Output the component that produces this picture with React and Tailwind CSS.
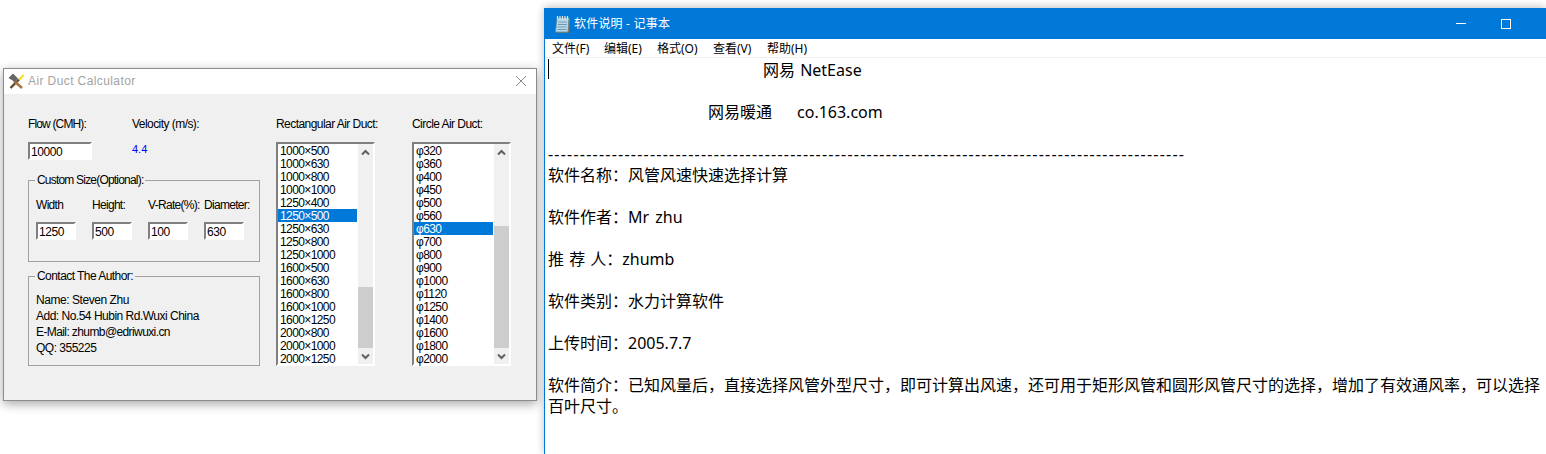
const rect = ["1000×500","1000×630","1000×800","1000×1000","1250×400","1250×500","1250×630","1250×800","1250×1000","1600×500","1600×630","1600×800","1600×1000","1600×1250","2000×800","2000×1000","2000×1250"];
const circ = ["320","360","400","450","500","560","630","700","800","900","1000","1120","1250","1400","1600","1800","2000"].map((v) => "φ" + v);

function Field({ value, w }) {
  return (
    <div className={`${w} h-[18px] border-2 border-t-[#808080] border-l-[#808080] border-b-white border-r-white bg-white pl-[1px] leading-[16px] text-[12px] tracking-[-0.4px] text-black`}>
      {value}
    </div>
  );
}

function Chevron({ up }) {
  return (
    <svg width="9" height="7" viewBox="0 0 9 7">
      <path d={up ? "M1 5.5 L4.5 2 L8 5.5" : "M1 1.5 L4.5 5 L8 1.5"} fill="none" stroke="#606060" strokeWidth="2" />
    </svg>
  );
}

function ListBox({ items, selected, spacerTop, thumbH }) {
  return (
    <div className="flex h-[224px] w-[99px] border-2 border-t-[#808080] border-l-[#808080] border-b-white border-r-white bg-white">
      <div className="flex w-[79px] shrink-0 flex-col text-[12px] tracking-[-0.6px] text-black">
        {items.map((it) => (
          <div key={it} className={`h-[13px] whitespace-nowrap pl-[2px] leading-[15px] ${it === selected ? "bg-[#0078d7] text-white" : ""}`}>{it}</div>
        ))}
      </div>
      <div className="w-[1px] shrink-0 bg-white" />
      <div className="flex w-[15px] shrink-0 flex-col bg-[#f0f0f0]">
        <div className="flex h-[17px] items-center justify-center"><Chevron up /></div>
        <div style={{ height: spacerTop }} />
        <div className="bg-[#cdcdcd]" style={{ height: thumbH }} />
        <div className="flex flex-1 items-center justify-center"><Chevron /></div>
      </div>
    </div>
  );
}

function HammerIcon() {
  return (
    <svg width="16" height="16" viewBox="0 0 16 16" className="shrink-0">
      <path d="M2.5 15 L11 6.5" stroke="#5e4a2e" strokeWidth="2.4" />
      <path d="M6 8 L14 15" stroke="#a8763c" strokeWidth="2.6" />
      <path d="M0.5 5 L5 0.5 L10 5.5 L7 9 Z" fill="#666666" />
      <path d="M10.5 6 L15 1 L16 3 L12 7.5 Z" fill="#f2e01e" />
    </svg>
  );
}

function NotepadIcon() {
  return (
    <svg width="16" height="18" viewBox="0 0 16 18" className="shrink-0">
      <path d="M3 3 H15 L14 17 H1.5 Z" fill="#b9d9ea" stroke="#5e8ba6" strokeWidth="0.8" />
      <path d="M14 17 L15 3 L15.8 3.5 L15 17.5 H2 V17 Z" fill="#9a7b4f" />
      <path d="M4 7 H13 M4 9.5 H13 M3.5 12 H12.5 M3.5 14.5 H12.5" stroke="#6f9cb5" strokeWidth="1" />
      <path d="M3.5 1 V4 M6 1 V4 M8.5 1 V4 M11 1 V4 M13.5 1 V4" stroke="#dfe7ec" strokeWidth="1.2" />
    </svg>
  );
}

const lines = [
  ["软件名称：风管风速快速选择计算", ""], ["", ""],
  ["软件作者：Mr zhu", "[word-spacing:2px]"], ["", ""],
  ["推 荐 人：zhumb", "[word-spacing:1px]"], ["", ""],
  ["软件类别：水力计算软件", ""], ["", ""],
  ["上传时间：2005.7.7", ""], ["", ""],
];

const menus = [["文件(F)", "w-[52px]"], ["编辑(E)", "w-[53px]"], ["格式(O)", "w-[56px]"], ["查看(V)", "w-[54px]"], ["帮助(H)", "w-[41px]"]];

export default function App() {
  return (
    <div className="relative h-[454px] w-[1546px] overflow-hidden bg-white" style={{ fontFamily: '"Liberation Sans", Arial, sans-serif' }}>
      {/* Dialog window */}
      <div className="absolute left-[3px] top-[68px] flex h-[333px] w-[534px] flex-col border border-[#8c8c8c] bg-[#f0f0f0] shadow-[0_3px_10px_rgba(0,0,0,0.35)]">
        <div className="flex h-[25px] shrink-0 items-center bg-white pb-[1px] pl-[4px] pr-[10px]">
          <HammerIcon />
          <span className="ml-[4px] text-[12px] tracking-[0.4px] text-[#a3a3a3]">Air Duct Calculator</span>
          <svg width="10" height="10" viewBox="0 0 10 10" className="ml-auto">
            <path d="M0 0 L10 10 M10 0 L0 10" stroke="#8a8a8a" strokeWidth="1" />
          </svg>
        </div>
        <div className="flex flex-1 pl-[24px] pt-[24px] text-[12px] tracking-[-0.5px] text-black">
          <div className="w-[232px] shrink-0">
            <div className="flex leading-[13px]">
              <div className="w-[104px]">
                <div className="tracking-[-0.85px]">Flow (CMH):</div>
                <div className="mt-[11px]"><Field value="10000" w="w-[64px]" /></div>
              </div>
              <div>
                <div className="tracking-[-0.55px]">Velocity (m/s):</div>
                <div className="mt-[12px] text-[11px] tracking-normal text-[#0000ff]">4.4</div>
              </div>
            </div>
            <fieldset className="mt-[14px] h-[88px] border border-[#a0a0a0] pl-[7px]">
              <legend className="ml-[-1px] bg-[#f0f0f0] px-[2px] leading-[13px] tracking-[-0.8px]">Custom Size(Optional):</legend>
              <div className="mt-[12px] flex gap-[16px] leading-[13px]">
                {[["Width","1250"],["Height:","500"],["V-Rate(%):","100"],["Diameter:","630"]].map(([l,v]) => (
                  <div key={l} className="w-[40px] shrink-0">
                    <div className="whitespace-nowrap tracking-[-0.7px]">{l}</div>
                    <div className="mt-[10px]"><Field value={v} w="w-[40px]" /></div>
                  </div>
                ))}
              </div>
            </fieldset>
            <fieldset className="mt-[8px] h-[96px] border border-[#a0a0a0] pl-[7px]">
              <legend className="ml-[-1px] bg-[#f0f0f0] px-[2px] leading-[13px] tracking-[-0.55px]">Contact The Author:</legend>
              <div className="mt-[9px] leading-[16px]">
                <div className="tracking-[-0.45px]">Name: Steven Zhu</div>
                <div className="tracking-[-0.5px]">Add: No.54 Hubin Rd.Wuxi China</div>
                <div className="tracking-[-0.6px]">E-Mail: zhumb@edriwuxi.cn</div>
                <div>QQ: 355225</div>
              </div>
            </fieldset>
          </div>
          <div className="ml-[16px] w-[136px] shrink-0">
            <div className="whitespace-nowrap leading-[13px] tracking-[-0.55px]">Rectangular Air Duct:</div>
            <div className="mt-[11px]"><ListBox items={rect} selected="1250×500" spacerTop={126} thumbH={61} /></div>
          </div>
          <div className="w-[99px] shrink-0">
            <div className="whitespace-nowrap leading-[13px] tracking-[-0.55px]">Circle Air Duct:</div>
            <div className="mt-[11px]"><ListBox items={circ} selected="φ630" spacerTop={65} thumbH={122} /></div>
          </div>
        </div>
      </div>

      {/* Notepad window */}
      <div className="absolute left-[544px] top-[8px] flex h-[446px] w-[1002px] flex-col border-l border-[#0078d7] bg-white shadow-[0_-1px_8px_rgba(0,0,0,0.25)]" style={{ fontFamily: '"Noto Sans", "Noto Sans CJK SC", sans-serif' }}>
        <div className="flex h-[31px] shrink-0 items-center bg-[#0078d7] pl-[9px] text-white">
          <NotepadIcon />
          <span className="ml-[4px] text-[12px] tracking-[0.2px]">软件说明 - 记事本</span>
          <div className="ml-auto flex w-[90px] items-center">
            <div className="h-[1px] w-[10px] bg-white" />
            <div className="ml-[35px] h-[10px] w-[10px] border border-white" />
          </div>
        </div>
        <div className="flex h-[18px] shrink-0 items-center pl-[7px] pt-[1px] text-[12px] text-black">
          {menus.map(([m, w]) => <span key={m} className={`${w} whitespace-nowrap`}>{m}</span>)}
        </div>
        <div className="h-[1px] shrink-0 bg-[#f0f0f0]" />
        <div className="relative flex-1 pl-[3px] pt-[2px] text-[16px] leading-[21px] text-black">
          <div className="absolute left-[3px] top-[1px] h-[20px] w-[1px] bg-black" />
          <div className="whitespace-pre pl-[215px] [word-spacing:1px]">网易 NetEase</div>
          <div className="h-[21px]" />
          <div className="whitespace-pre pl-[160px]"><span>网易暖通</span><span className="ml-[25px]">co.163.com</span></div>
          <div className="h-[21px]" />
          <div className="whitespace-nowrap tracking-[1.22px]">{"-".repeat(100)}</div>
          {lines.map(([l, c], i) => <div key={i} className={`h-[21px] whitespace-pre ${c}`}>{l}</div>)}
          <div className="w-[996px]">软件简介：已知风量后，直接选择风管外型尺寸，即可计算出风速，还可用于矩形风管和圆形风管尺寸的选择，增加了有效通风率，可以选择百叶尺寸。</div>
        </div>
      </div>
    </div>
  );
}
